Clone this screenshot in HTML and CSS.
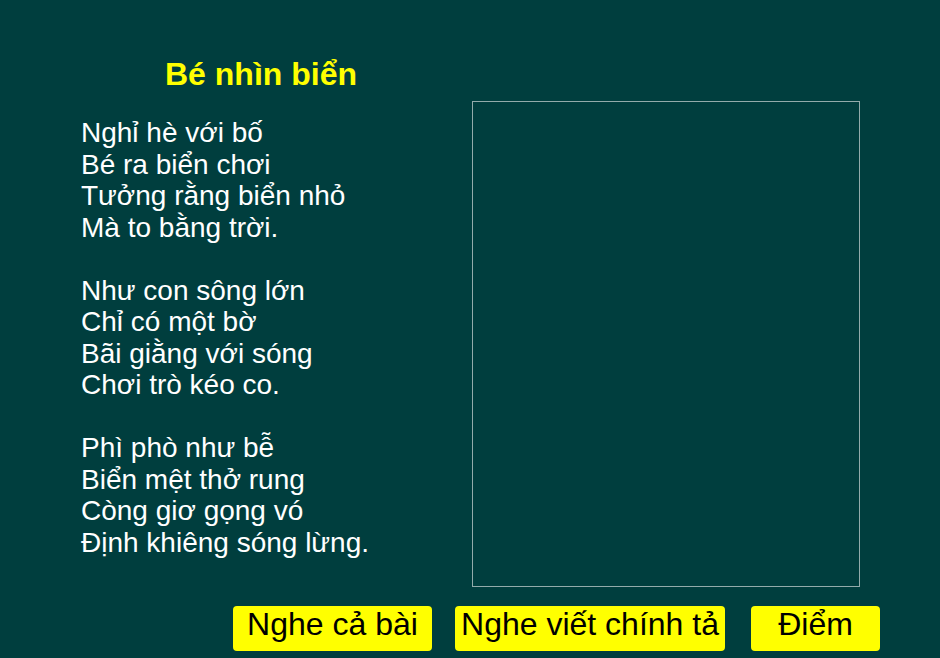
FILE: index.html
```html
<!DOCTYPE html>
<html lang="vi">
<head>
<meta charset="utf-8">
<title>Bé nhìn biển</title>
<link rel="stylesheet" href="styles.css">
</head>
<body>
<div class="page">
  <div class="main">
    <div class="left">
      <h1 class="title">Bé nhìn biển</h1>
      <div class="poem">
        <p class="stanza">Nghỉ hè với bố<br>Bé ra biển chơi<br>Tưởng rằng biển nhỏ<br>Mà to bằng trời.</p>
        <p class="stanza">Như con sông lớn<br>Chỉ có một bờ<br>Bãi giằng với sóng<br>Chơi trò kéo co.</p>
        <p class="stanza">Phì phò như bễ<br>Biển mệt thở rung<br>Còng giơ gọng vó<br>Định khiêng sóng lừng.</p>
      </div>
    </div>
    <div class="board"></div>
  </div>
  <div class="actions">
    <button class="btn btn-all">Nghe cả bài</button>
    <button class="btn btn-dict">Nghe viết chính tả</button>
    <button class="btn btn-score">Điểm</button>
  </div>
</div>
</body>
</html>
```
FILE: styles.css
```css
html, body {
  margin: 0;
  padding: 0;
  background: #003e3e;
}
body {
  width: 940px;
  height: 658px;
  overflow: hidden;
  font-family: "Liberation Sans", Arial, sans-serif;
}
.page {
  display: flex;
  flex-direction: column;
}
.main {
  display: flex;
  align-items: flex-start;
}
.left {
  width: 391px;
  padding: 58px 0 0 81px;
}
.title {
  margin: 0 0 27px 84px;
  font-size: 32px;
  line-height: 32px;
  font-weight: bold;
  color: #ffff00;
}
.poem {
  color: #ffffff;
  font-size: 28px;
  line-height: 31.5px;
}
.stanza {
  margin: 0 0 31.5px 0;
}
.stanza:last-child {
  margin-bottom: 0;
}
.board {
  margin-top: 101px;
  width: 386px;
  height: 484px;
  border: 1px solid #93abab;
}
.actions {
  display: flex;
  margin-top: 19px;
  padding-left: 233px;
}
.btn {
  height: 45px;
  border: none;
  border-radius: 4px;
  background: #ffff00;
  color: #000000;
  font-family: "Liberation Sans", Arial, sans-serif;
  font-size: 32px;
  padding: 0 0 8px 0;
  text-align: center;
}
.btn-all { width: 199px; }
.btn-dict { width: 270px; margin-left: 23px; }
.btn-score { width: 129px; margin-left: 26px; }
```
